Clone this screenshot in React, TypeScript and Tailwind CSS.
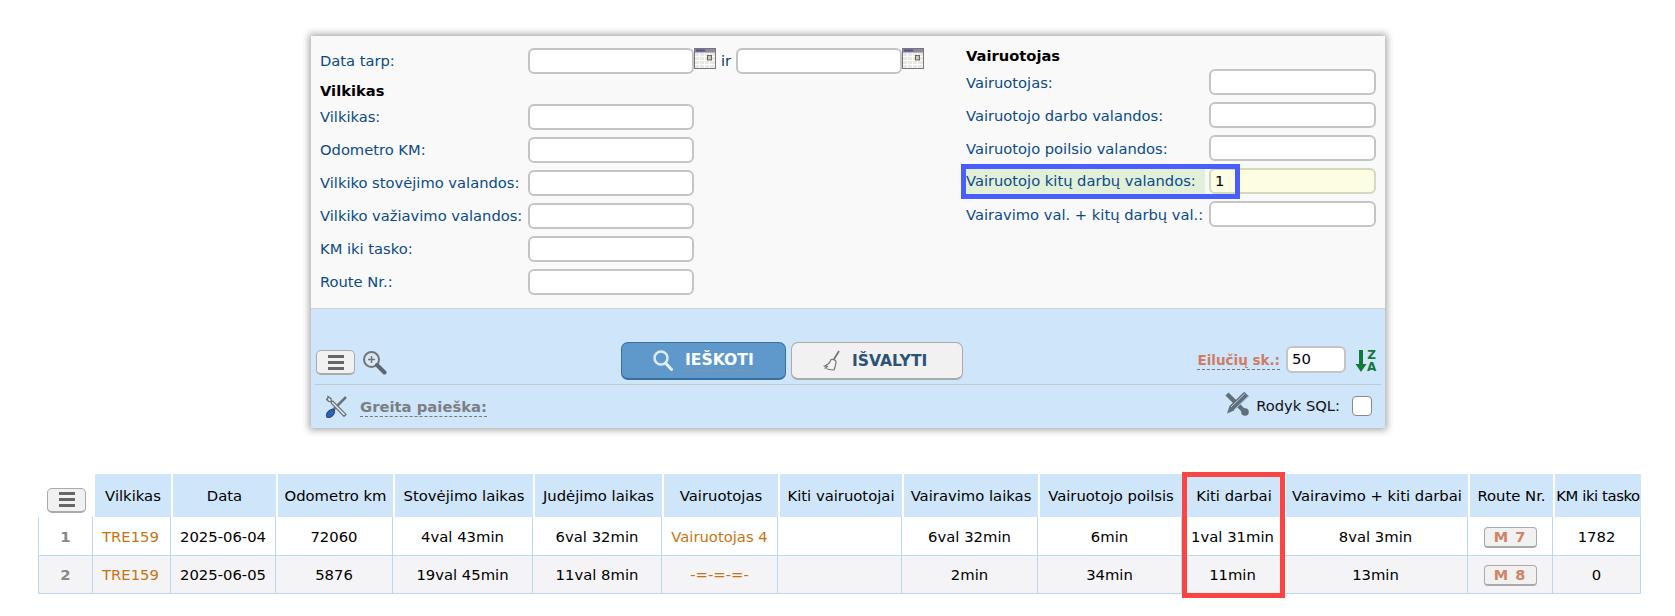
import React from "react";

const font = "font-['DejaVu_Sans',sans-serif]";

function Cal({ className = "" }: { className?: string }) {
  return (
    <svg width="22" height="21" viewBox="0 0 22 21" className={`shrink-0 ${className}`}>
      <rect x="0.5" y="0.5" width="21" height="20" fill="#e9e7e4" stroke="#77757f" />
      <rect x="1" y="1" width="20" height="3.5" fill="#8d8b9a" />
      <rect x="2" y="1.5" width="9" height="2" fill="#55558c" />
      <g stroke="#fff" strokeWidth="1">
        <path d="M1 8.5H21M1 12.5H21M1 16.5H21M5.5 5V20M10.5 5V20M15.5 5V20" />
      </g>
      <rect x="13.5" y="7.5" width="4" height="4.5" fill="#cfc5bb" stroke="#6f6259" />
    </svg>
  );
}

function Field({ value, yellow, wide }: { value?: string; yellow?: boolean; wide?: boolean }) {
  return (
    <div
      className={`h-[26px] shrink-0 rounded-[6px] border-2 pl-[4px] text-[14.8px] leading-[22px] text-black ${
        wide ? "w-[167px]" : "w-[166px]"
      } ${yellow ? "border-[#d3d8c0] bg-[#fdfde3]" : "border-[#c4c4c4] bg-white"}`}
    >
      {value}
    </div>
  );
}

function Row({ label, w, right }: { label: string; w: string; right?: boolean }) {
  return (
    <div className="flex h-[26px] items-center">
      <div className={`${w} shrink-0 whitespace-nowrap text-[#0b4a86] ${right ? "pt-[3px]" : "pt-[1px]"}`}>{label}</div>
      <Field wide={right} />
    </div>
  );
}

function MenuBtn({ className = "" }: { className?: string }) {
  return (
    <div className={`flex h-[25px] w-[39px] shrink-0 flex-col items-center justify-center gap-[3px] rounded-[5px] border border-b-2 border-[#aaa] bg-[#f1f1f1] ${className}`}>
      <div className="h-[3px] w-[16px] bg-[#666]" />
      <div className="h-[3px] w-[16px] bg-[#666]" />
      <div className="h-[3px] w-[16px] bg-[#666]" />
    </div>
  );
}

const headers = [
  "Vilkikas", "Data", "Odometro km", "Stovėjimo laikas", "Judėjimo laikas", "Vairuotojas", "Kiti vairuotojai",
  "Vairavimo laikas", "Vairuotojo poilsis", "Kiti darbai", "Vairavimo + kiti darbai", "Route Nr.", "KM iki tasko",
];
const widths = [55, 78, 105, 117, 140, 129, 116, 124, 136, 144, 102, 184, 85, 88];

const rows = [
  ["1", "TRE159", "2025-06-04", "72060", "4val 43min", "6val 32min", "Vairuotojas 4", "", "6val 32min", "6min", "1val 31min", "8val 3min", "M 7", "1782"],
  ["2", "TRE159", "2025-06-05", "5876", "19val 45min", "11val 8min", "-=-=-=-", "", "2min", "34min", "11min", "13min", "M 8", "0"],
];

export default function App() {
  return (
    <div className={`${font} h-[616px] w-[1675px] overflow-hidden bg-white pt-[36px] text-[14.7px] text-black`}>
      <div className="ml-[311px] h-[392px] w-[1074px] bg-[#f9f9f9] shadow-[0_0_7px_2px_rgba(0,0,0,0.35)]">
        <div className="flex h-[272px] items-start">
          <div className="ml-[9px] mt-[12px] flex w-[636px] shrink-0 flex-col">
            <div className="flex h-[26px] items-center">
              <div className="w-[208px] shrink-0 pt-[1px] text-[#0b4a86]">Data tarp:</div>
              <Field />
              <Cal className="-mt-[6px]" />
              <span className="mx-[5px] w-[10px] text-[#0b3a66]">ir</span>
              <Field />
              <Cal className="-mt-[6px]" />
            </div>
            <div className="mt-[5px] h-[23px] font-bold leading-[23px]">Vilkikas</div>
            <div className="mt-[2px] flex flex-col gap-[7px]">
              {["Vilkikas:", "Odometro KM:", "Vilkiko stovėjimo valandos:", "Vilkiko važiavimo valandos:", "KM iki tasko:", "Route Nr.:"].map((l) => (
                <Row key={l} label={l} w="w-[208px]" />
              ))}
            </div>
          </div>
          <div className="ml-[10px] mt-[11px] flex flex-col">
            <div className="h-[18px] font-bold leading-[18px]">Vairuotojas</div>
            <div className="mt-[4px] flex flex-col gap-[7px]">
              <Row label="Vairuotojas:" w="w-[243px]" right />
              <Row label="Vairuotojo darbo valandos:" w="w-[243px]" right />
              <Row label="Vairuotojo poilsio valandos:" w="w-[243px]" right />
              <div className="relative flex h-[26px] items-center">
                <div className="flex h-[26px] w-[239px] shrink-0 items-center whitespace-nowrap bg-[#e2efd9] pt-[1px] text-[#0b4a86]">Vairuotojo kitų darbų valandos:</div>
                <div className="ml-[4px]"><Field value="1" yellow wide /></div>
                <div className="absolute left-[-5px] top-[-4px] h-[35px] w-[279px] border-[5px] border-[#4a5dff]" />
              </div>
              <Row label="Vairavimo val. + kitų darbų val.:" w="w-[243px]" right />
            </div>
          </div>
        </div>

        <div className="h-[120px] border-t border-[#cfcfcf] bg-[#cfe5f9] px-[4px]">
          <div className="flex h-[76px] items-start border-b border-[#c2c9cf]">
            <MenuBtn className="ml-[1px] mt-[41px]" />
            <svg width="25" height="25" viewBox="0 0 25 25" className="ml-[7px] mt-[41px] shrink-0">
              <circle cx="9.500" cy="9.500" r="7.500" fill="#dbe7f2" stroke="#6b7680" strokeWidth="2" />
              <path d="M9.500 6v7M6 9.500h7" stroke="#6b7680" strokeWidth="1.500" />
              <path d="M15 15l7.500 7.500" stroke="#5c6670" strokeWidth="4" strokeLinecap="round" />
            </svg>
            <button className="ml-[234px] mt-[33px] flex h-[38px] w-[165px] shrink-0 items-center rounded-[7px] border border-b-2 border-[#3d6f9e] bg-[#5f99cb] pl-[31px] font-bold text-white">
              <svg width="20" height="21" viewBox="0 0 20 21" className="-mt-[1px] shrink-0">
                <circle cx="8" cy="8" r="6.500" fill="none" stroke="#dcebf7" strokeWidth="2.500" />
                <path d="M12.500 13l6 6.500" stroke="#e8f1f8" strokeWidth="3" strokeLinecap="round" />
              </svg>
              <span className="ml-[12px] -mt-[1px] border-b border-dashed border-[#a98f78] text-[15.600px] leading-[20px]">IEŠKOTI</span>
            </button>
            <button className="ml-[5px] mt-[33px] flex h-[38px] w-[172px] shrink-0 items-center rounded-[7px] border border-b-2 border-[#aaa] bg-[#f1f1f1] pl-[31px] font-bold text-[#2d5277]">
              <svg width="18" height="22" viewBox="0 0 18 22" className="shrink-0">
                <path d="M16 1l-5.500 9" stroke="#777" strokeWidth="1.800" />
                <path d="M8 9.500c3-.5 5 .5 5 3-.5 3-1 5-2 7.500-3 0-6-.5-9.500-2 1 0 2.500-.5 3-1.500-1 0-2 0-3-.5 3-1 5.500-3 6.500-6.500z" fill="#f4f4f4" stroke="#777" strokeWidth="1.200" />
              </svg>
              <span className="ml-[11px] pt-[2px] text-[15.600px]">IŠVALYTI</span>
            </button>
            <div className="ml-auto flex items-start">
              <span className="mt-[42px] border-b border-dashed border-[#777] text-[13.500px] font-bold leading-[18px] text-[#d07c63]">Eilučių sk.:</span>
              <div className="ml-[6px] mt-[37px] flex h-[27px] w-[60px] items-center rounded-[6px] border-2 border-[#c4c4c4] bg-white pl-[4px] text-[14.800px]">50</div>
              <div className="ml-[9px] mr-[4px] mt-[40px] flex w-[22px] items-start">
                <svg width="12" height="24" viewBox="0 0 12 24" className="shrink-0">
                  <path d="M4 1h4v14h3.500L6 23 .5 15H4z" fill="#107a3a" />
                </svg>
                <div className="flex flex-col items-center text-[12px] font-bold leading-[12px] text-[#107a3a]">
                  <span>Z</span>
                  <span>A</span>
                </div>
              </div>
            </div>
          </div>
          <div className="flex h-[43px] items-center">
            <svg width="23" height="23" viewBox="0 0 23 23" className="ml-[10px] shrink-0">
              <path d="M21 2L8 15" stroke="#68737d" strokeWidth="2.500" />
              <path d="M3 1.500l3 2.200.2 2.200 1.800.5 13 13-2 2L6.500 8.500 6 6.500 3.500 6.300 1.200 3.800l1.300 1z" fill="#e7eaec" stroke="#68737d" strokeWidth="1.300" />
              <ellipse cx="5.500" cy="18.500" rx="5" ry="3" transform="rotate(-45 5.500 18.500)" fill="#2d66ae" stroke="#1d3f75" />
            </svg>
            <span className="ml-[12px] mt-[1px] border-b border-dashed border-[#777] text-[14.800px] font-bold leading-[18px] text-[#7b7f84]">Greita paieška:</span>
            <div className="ml-auto flex items-center">
              <svg width="27" height="27" viewBox="0 0 27 27" className="-mt-[5px] shrink-0">
                <path d="M4 4l18 18" stroke="#5f6f7b" strokeWidth="4.500" />
                <circle cx="22" cy="22" r="3.800" fill="#5f6f7b" />
                <path d="M23.500 4L8.500 18.500" stroke="#5f6f7b" strokeWidth="6.500" />
                <path d="M22 3.500L8 17M25 6.500L11 20" stroke="#cfe5f9" strokeWidth="0.800" />
                <path d="M6.500 16l4.500 4.500-7 3z" fill="#5f6f7b" />
              </svg>
              <span className="ml-[6px] text-[#111]">Rodyk SQL:</span>
              <div className="ml-[12px] mr-[9px] h-[20px] w-[20px] rounded-[4px] border border-[#8a8a8a] bg-white" />
            </div>
          </div>
        </div>
      </div>

      <div className="relative ml-[38px] mt-[46px] w-[1603px]">
        <table className="w-[1603px] table-fixed border-separate border-spacing-0 text-center text-[14.800px]">
          <colgroup>
            {widths.map((w, i) => (
              <col key={i} style={{ width: w }} />
            ))}
          </colgroup>
          <thead>
            <tr className="h-[43px]">
              <th className="p-0 font-normal">
                <MenuBtn className="ml-[9px] mt-[9px]" />
              </th>
              {headers.map((h, i) => (
                <th
                  key={h}
                  className={`whitespace-nowrap border-l-2 border-white bg-[#cfe5f9] p-0 pt-[1px] font-normal ${i === 12 ? "tracking-[-0.4px]" : ""}`}
                >
                  {h}
                </th>
              ))}
            </tr>
          </thead>
          <tbody>
            {rows.map((r, ri) => (
              <tr key={ri} className={ri === 0 ? "h-[39px] bg-white" : "h-[38px] bg-[#f4f4f6]"}>
                {r.map((c, i) => {
                  const orange = i === 1 || i === 6;
                  return (
                    <td
                      key={i}
                      className={`whitespace-nowrap border-b border-r border-[#b9d9ee] p-0 pt-[2px] ${i === 0 ? "border-l font-bold text-[#888]" : ""} ${orange ? "text-[#c8730f]" : ""} ${i === 1 ? "pr-[2px]" : ""}`}
                    >
                      {i === 12 ? (
                        <span className="inline-block h-[21px] w-[53px] rounded-[4px] border border-b-2 border-[#aaa] bg-[#f1f1f1] text-[14.500px] font-bold leading-[18px] tracking-[1px] text-[#cf8468]">{c}</span>
                      ) : (
                        c
                      )}
                    </td>
                  );
                })}
              </tr>
            ))}
          </tbody>
        </table>
        <div className="absolute left-[1144px] top-[-2px] h-[126px] w-[103px] border-[5px] border-[#fb4444]" />
      </div>
    </div>
  );
}
